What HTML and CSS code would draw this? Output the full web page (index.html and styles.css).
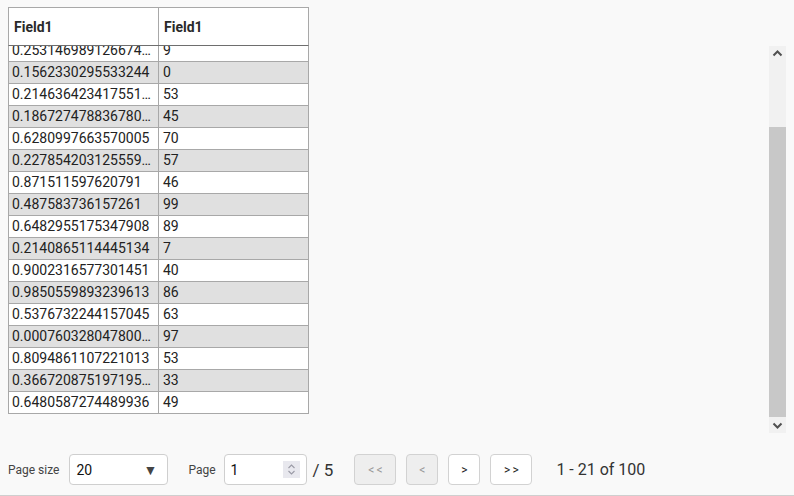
FILE: index.html
```html
<!DOCTYPE html>
<html>
<head>
<meta charset="utf-8">
<link rel="stylesheet" href="styles.css">
</head>
<body>
<div class="grid">
  <div class="head">
    <div class="hcell">Field1</div>
    <div class="hcell">Field1</div>
  </div>
  <div class="bodywrap">
    <div class="viewport">
      <div class="rows">
        <div class="row"><div class="cell">0.253146989126674…</div><div class="cell">9</div></div>
        <div class="row alt"><div class="cell">0.1562330295533244</div><div class="cell">0</div></div>
        <div class="row"><div class="cell">0.214636423417551…</div><div class="cell">53</div></div>
        <div class="row alt"><div class="cell">0.186727478836780…</div><div class="cell">45</div></div>
        <div class="row"><div class="cell">0.6280997663570005</div><div class="cell">70</div></div>
        <div class="row alt"><div class="cell">0.227854203125559…</div><div class="cell">57</div></div>
        <div class="row"><div class="cell">0.871511597620791</div><div class="cell">46</div></div>
        <div class="row alt"><div class="cell">0.487583736157261</div><div class="cell">99</div></div>
        <div class="row"><div class="cell">0.6482955175347908</div><div class="cell">89</div></div>
        <div class="row alt"><div class="cell">0.2140865114445134</div><div class="cell">7</div></div>
        <div class="row"><div class="cell">0.9002316577301451</div><div class="cell">40</div></div>
        <div class="row alt"><div class="cell">0.9850559893239613</div><div class="cell">86</div></div>
        <div class="row"><div class="cell">0.5376732244157045</div><div class="cell">63</div></div>
        <div class="row alt"><div class="cell">0.000760328047800…</div><div class="cell">97</div></div>
        <div class="row"><div class="cell">0.8094861107221013</div><div class="cell">53</div></div>
        <div class="row alt"><div class="cell">0.366720875197195…</div><div class="cell">33</div></div>
        <div class="row"><div class="cell">0.6480587274489936</div><div class="cell">49</div></div>
      </div>
    </div>
    <div class="scrollbar">
      <div class="sb-btn">
        <svg width="17" height="16" viewBox="0 0 17 16"><path d="M4.5 9.5 L8.5 5.5 L12.5 9.5" fill="none" stroke="#505050" stroke-width="2"/></svg>
      </div>
      <div class="sb-track"><div class="sb-thumb"></div></div>
      <div class="sb-btn">
        <svg width="17" height="16" viewBox="0 0 17 16"><path d="M4.5 6.5 L8.5 10.5 L12.5 6.5" fill="none" stroke="#505050" stroke-width="2"/></svg>
      </div>
    </div>
  </div>
  <div class="pager">
    <span class="label">Page size</span>
    <div class="select"><span>20</span><span class="caret">▼</span></div>
    <span class="label page-label">Page</span>
    <div class="numinput"><span>1</span>
      <div class="spin">
        <svg width="17" height="17" viewBox="0 0 17 17"><path d="M5.5 7 L8.5 4 L11.5 7" fill="none" stroke="#9a9aa6" stroke-width="1.1"/><path d="M5.5 10 L8.5 13 L11.5 10" fill="none" stroke="#9a9aa6" stroke-width="1.1"/></svg>
      </div>
    </div>
    <span class="total">/ 5</span>
    <button class="btn wide first disabled">&lt;&lt;</button>
    <button class="btn disabled">&lt;</button>
    <button class="btn">&gt;</button>
    <button class="btn wide">&gt;&gt;</button>
    <span class="summary">1 - 21 of 100</span>
  </div>
</div>
</body>
</html>
```
FILE: styles.css
```css
html, body {
  margin: 0;
  padding: 0;
  background: #f9f9f9;
}
body {
  font-family: Roboto, "Liberation Sans", sans-serif;
  color: #222;
  padding: 7px 8px 0 8px;
  height: 496px;
  box-sizing: border-box;
  overflow: hidden;
}
.grid {
  display: flex;
  flex-direction: column;
  width: 778px;
}
.head {
  display: flex;
  width: 301px;
  height: 39px;
  box-sizing: border-box;
  border: 1px solid #a8a8a8;
  border-bottom: 1px solid #6e6e6e;
  background: #ffffff;
}
.hcell {
  width: 144px;
  padding: 0 0 0 5px;
  display: flex;
  align-items: center;
  font-weight: 700;
  font-size: 14px;
  color: #2a2a2a;
}
.hcell + .hcell {
  border-left: 1px solid #a8a8a8;
}
.bodywrap {
  display: flex;
  height: 387px;
}
.viewport {
  flex: 1;
  overflow: hidden;
  height: 387px;
}
.rows {
  margin-top: -6px;
  width: 301px;
}
.row {
  display: flex;
  height: 22px;
  box-sizing: border-box;
  border-left: 1px solid #a8a8a8;
  border-right: 1px solid #a8a8a8;
  border-bottom: 1px solid #a8a8a8;
  background: #ffffff;
}
.row.alt {
  background: #e0e0e0;
}
.cell {
  width: 149px;
  box-sizing: border-box;
  padding: 0 3px;
  font-size: 14px;
  line-height: 21px;
  white-space: nowrap;
  overflow: hidden;
  color: #222;
}
.cell + .cell {
  width: 150px;
  padding-left: 4px;
  border-left: 1px solid #a8a8a8;
}
.scrollbar {
  width: 17px;
  display: flex;
  flex-direction: column;
  background: #f1f1f1;
}
.sb-btn {
  height: 16px;
  display: flex;
}
.sb-track {
  flex: 1;
  display: flex;
  flex-direction: column;
  justify-content: flex-end;
}
.sb-thumb {
  height: 290px;
  background: #c8c8c8;
}
.pager {
  display: flex;
  align-items: center;
  height: 63px;
  box-sizing: border-box;
  border-bottom: 1px solid #cfcfcf;
  margin: 0 -8px;
  padding: 11px 8px 0 8px;
}
.label {
  font-size: 12px;
  color: #444;
}
.select {
  margin-left: 10px;
  width: 99px;
  height: 31px;
  box-sizing: border-box;
  border: 1px solid #cfcfcf;
  border-radius: 4px;
  background: #fff;
  display: flex;
  align-items: center;
  justify-content: space-between;
  padding: 0 10px 0 6px;
  font-size: 14px;
  color: #111;
}
.caret {
  font-size: 14px;
  color: #444;
}
.page-label {
  margin-left: 20px;
}
.numinput {
  margin-left: 8px;
  width: 83px;
  height: 31px;
  box-sizing: border-box;
  border: 1px solid #cfcfcf;
  border-radius: 4px;
  background: #fff;
  display: flex;
  align-items: center;
  justify-content: space-between;
  padding: 0 6px 0 6px;
  font-size: 14px;
  color: #111;
}
.spin {
  width: 17px;
  height: 17px;
  background: #e8e8ee;
  display: flex;
}
.total {
  margin-left: 6px;
  font-size: 17px;
  color: #333;
}
.btn {
  margin-left: 10px;
  width: 32px;
  height: 31px;
  box-sizing: border-box;
  border: 1px solid #d2d2d2;
  border-radius: 4px;
  background: #fff;
  font-family: Roboto, "Liberation Sans", sans-serif;
  font-size: 12px;
  letter-spacing: 2px;
  text-indent: 2px;
  color: #222;
  padding: 0;
}
.btn.wide {
  width: 42px;
}
.btn.first {
  margin-left: 21px;
}
.btn.disabled {
  background: #eeeeee;
  color: #999;
}
.summary {
  margin-left: 24px;
  font-size: 16px;
  color: #333;
}
```
